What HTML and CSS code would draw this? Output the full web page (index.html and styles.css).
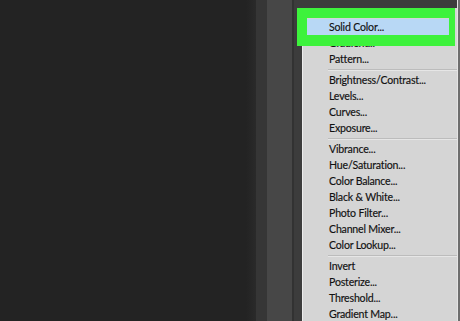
FILE: index.html
```html
<!DOCTYPE html>
<html>
<head>
<meta charset="utf-8">
<link rel="stylesheet" href="styles.css">
</head>
<body>
<div class="screen">
  <div class="canvas"></div>
  <div class="col col-a"></div>
  <div class="col col-b"></div>
  <div class="col col-c"></div>
  <div class="col col-d"></div>
  <div class="menu-wrap">
    <ul class="menu">
      <li class="item active">Solid Color...</li>
      <li class="item">Gradient...</li>
      <li class="item">Pattern...</li>
      <li class="sep"></li>
      <li class="item">Brightness/Contrast...</li>
      <li class="item">Levels...</li>
      <li class="item">Curves...</li>
      <li class="item">Exposure...</li>
      <li class="sep"></li>
      <li class="item">Vibrance...</li>
      <li class="item">Hue/Saturation...</li>
      <li class="item">Color Balance...</li>
      <li class="item">Black &amp; White...</li>
      <li class="item">Photo Filter...</li>
      <li class="item">Channel Mixer...</li>
      <li class="item">Color Lookup...</li>
      <li class="sep"></li>
      <li class="item">Invert</li>
      <li class="item">Posterize...</li>
      <li class="item">Threshold...</li>
      <li class="item">Gradient Map...</li>
    </ul>
  </div>
  <div class="col col-e"></div>
  <div class="callout"></div>
</div>
</body>
</html>
```

FILE: styles.css
```css
* { box-sizing: border-box; }
html, body {
  margin: 0;
  padding: 0;
  background: #232323;
  overflow: hidden;
}
.screen {
  position: relative;
  display: flex;
  width: 460px;
  height: 321px;
  overflow: hidden;
  font-family: Lato, "Open Sans", sans-serif;
}
.canvas {
  width: 256px;
  flex: none;
  background: linear-gradient(to right, #232323 0, #232323 246px, #2a2a2a 256px);
}
.col { flex: none; height: 100%; }
.col-a { width: 11px; background: #363636; }
.col-b { width: 25px; background: #474747; }
.col-c { width: 2px; background: #323232; }
.col-d { width: 8px; background: #3c3c3c; }
.col-e { width: 3px; background: #6e6e6e; border-left: 1px solid #e4e4e4; }
.menu-wrap {
  width: 155px;
  flex: none;
  background: #3c3c3c;
  padding-top: 8px;
}
.menu {
  list-style: none;
  margin: 0;
  padding: 11px 0 0 0;
  height: 100%;
  background: #d5d5d5;
  border-left: 1px solid #ececec;
}
.item {
  height: 16px;
  line-height: 16px;
  font-size: 10.6px;
  letter-spacing: -0.2px;
  color: #111111;
  padding-left: 26px;
  white-space: nowrap;
  -webkit-text-stroke: 0.15px #111111;
}
.item.active {
  background: #b8d8f5;
  margin: 0 8px 0 4px;
  padding-left: 22px;
}
.sep {
  height: 5px;
  margin-left: 25px;
  display: flex;
  flex-direction: column;
  justify-content: center;
}
.sep::before {
  content: "";
  display: block;
  height: 1px;
  background: #bcbcbc;
  border-bottom: 1px solid #e6e6e6;
  box-sizing: content-box;
}
.callout {
  position: absolute;
  left: 297px;
  top: 8px;
  width: 158px;
  height: 38px;
  border-style: solid;
  border-color: #3df23c;
  border-width: 10px 6px 11px 10px;
}
```
